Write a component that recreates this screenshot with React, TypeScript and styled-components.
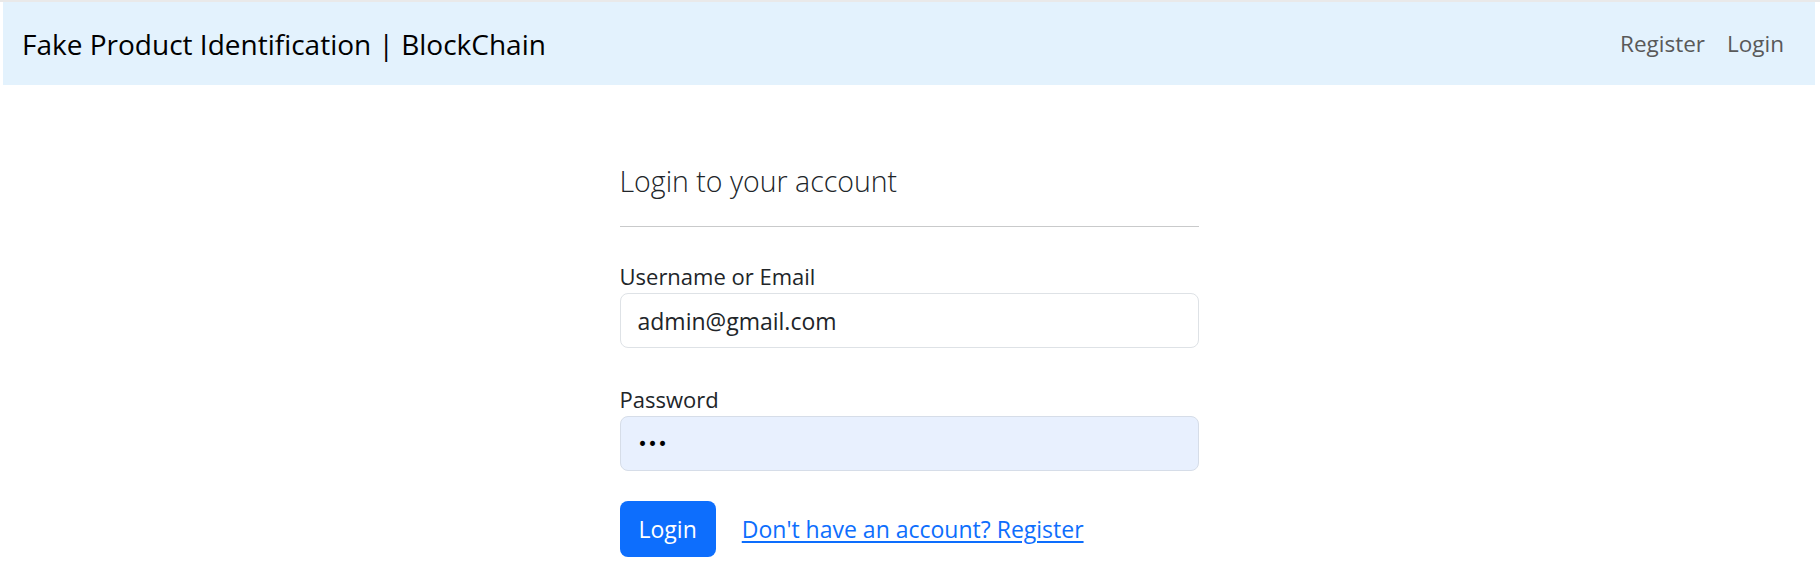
import React from "react";
import styled, { createGlobalStyle } from "styled-components";

const GlobalStyle = createGlobalStyle`
  html, body {
    margin: 0;
    padding: 0;
    background: #ffffff;
  }
  body {
    font-family: "Open Sans", "Noto Sans", "Liberation Sans", sans-serif;
    color: #212529;
  }
  * { box-sizing: border-box; }
`;

const Page = styled.div`
  border-top: 2px solid #e9e9e9;
  padding: 0 5px 0 3px;
  min-height: 561px;
`;

const Navbar = styled.nav`
  height: 83px;
  background: #e3f2fd;
  display: flex;
  align-items: center;
  justify-content: space-between;
  padding: 0 20px 0 19px;
`;

const Brand = styled.a`
  font-size: 28px;
  color: #000000;
  text-decoration: none;
  white-space: nowrap;
  line-height: 34px;
`;

const NavList = styled.ul`
  list-style: none;
  display: flex;
  margin: 0;
  padding: 0;
`;

const NavLink = styled.a`
  display: block;
  padding: 0 11px;
  font-size: 22.5px;
  line-height: 30px;
  color: #595959;
  text-decoration: none;
`;

const Main = styled.main`
  display: flex;
  justify-content: center;
  padding-top: 78px;
`;

const FormCard = styled.form`
  width: 579px;
  display: flex;
  flex-direction: column;
`;

const Heading = styled.h3`
  margin: 0;
  font-size: 28.5px;
  font-weight: 300;
  line-height: 36px;
  color: #212529;
`;

const Rule = styled.hr`
  margin: 27px 0 0;
  border: 0;
  border-top: 1px solid #c9cacb;
  height: 0;
`;

const Field = styled.div<{ $top: number }>`
  display: flex;
  flex-direction: column;
  margin-top: ${(p) => p.$top}px;
`;

const Label = styled.label`
  font-size: 22px;
  line-height: 26px;
  margin-bottom: 4px;
  color: #212529;
`;

const Input = styled.div<{ $autofill?: boolean }>`
  height: 55px;
  border: 1px solid ${(p) => (p.$autofill ? "#d6dde8" : "#dee2e6")};
  border-radius: 8px;
  background: ${(p) => (p.$autofill ? "#e8f0fe" : "#ffffff")};
  display: flex;
  align-items: center;
  padding: 0 17px;
  font-size: 23px;
  color: #212529;
`;

const Dots = styled.span`
  font-size: 17px;
  color: #000000;
  font-family: "DejaVu Sans", sans-serif;
`;

const Actions = styled.div`
  display: flex;
  align-items: center;
  gap: 26px;
  margin-top: 30px;
`;

const Button = styled.button`
  height: 56px;
  padding: 0 19px;
  border: 0;
  border-radius: 8px;
  background: #0d6efd;
  color: #ffffff;
  font-family: inherit;
  font-size: 23px;
`;

const TextLink = styled.a`
  font-size: 23px;
  color: #0d6efd;
  text-decoration: underline;
  text-underline-offset: 3px;
`;

export default function App() {
  return (
    <>
      <GlobalStyle />
      <Page>
        <Navbar>
          <Brand href="#">Fake Product Identification | BlockChain</Brand>
          <NavList>
            <li>
              <NavLink href="#">Register</NavLink>
            </li>
            <li>
              <NavLink href="#">Login</NavLink>
            </li>
          </NavList>
        </Navbar>
        <Main>
          <FormCard onSubmit={(e) => e.preventDefault()}>
            <Heading>Login to your account</Heading>
            <Rule />
            <Field $top={36}>
              <Label>Username or Email</Label>
              <Input>admin@gmail.com</Input>
            </Field>
            <Field $top={38}>
              <Label>Password</Label>
              <Input $autofill>
                <Dots>•••</Dots>
              </Input>
            </Field>
            <Actions>
              <Button type="submit">Login</Button>
              <TextLink href="#">Don't have an account? Register</TextLink>
            </Actions>
          </FormCard>
        </Main>
      </Page>
    </>
  );
}
